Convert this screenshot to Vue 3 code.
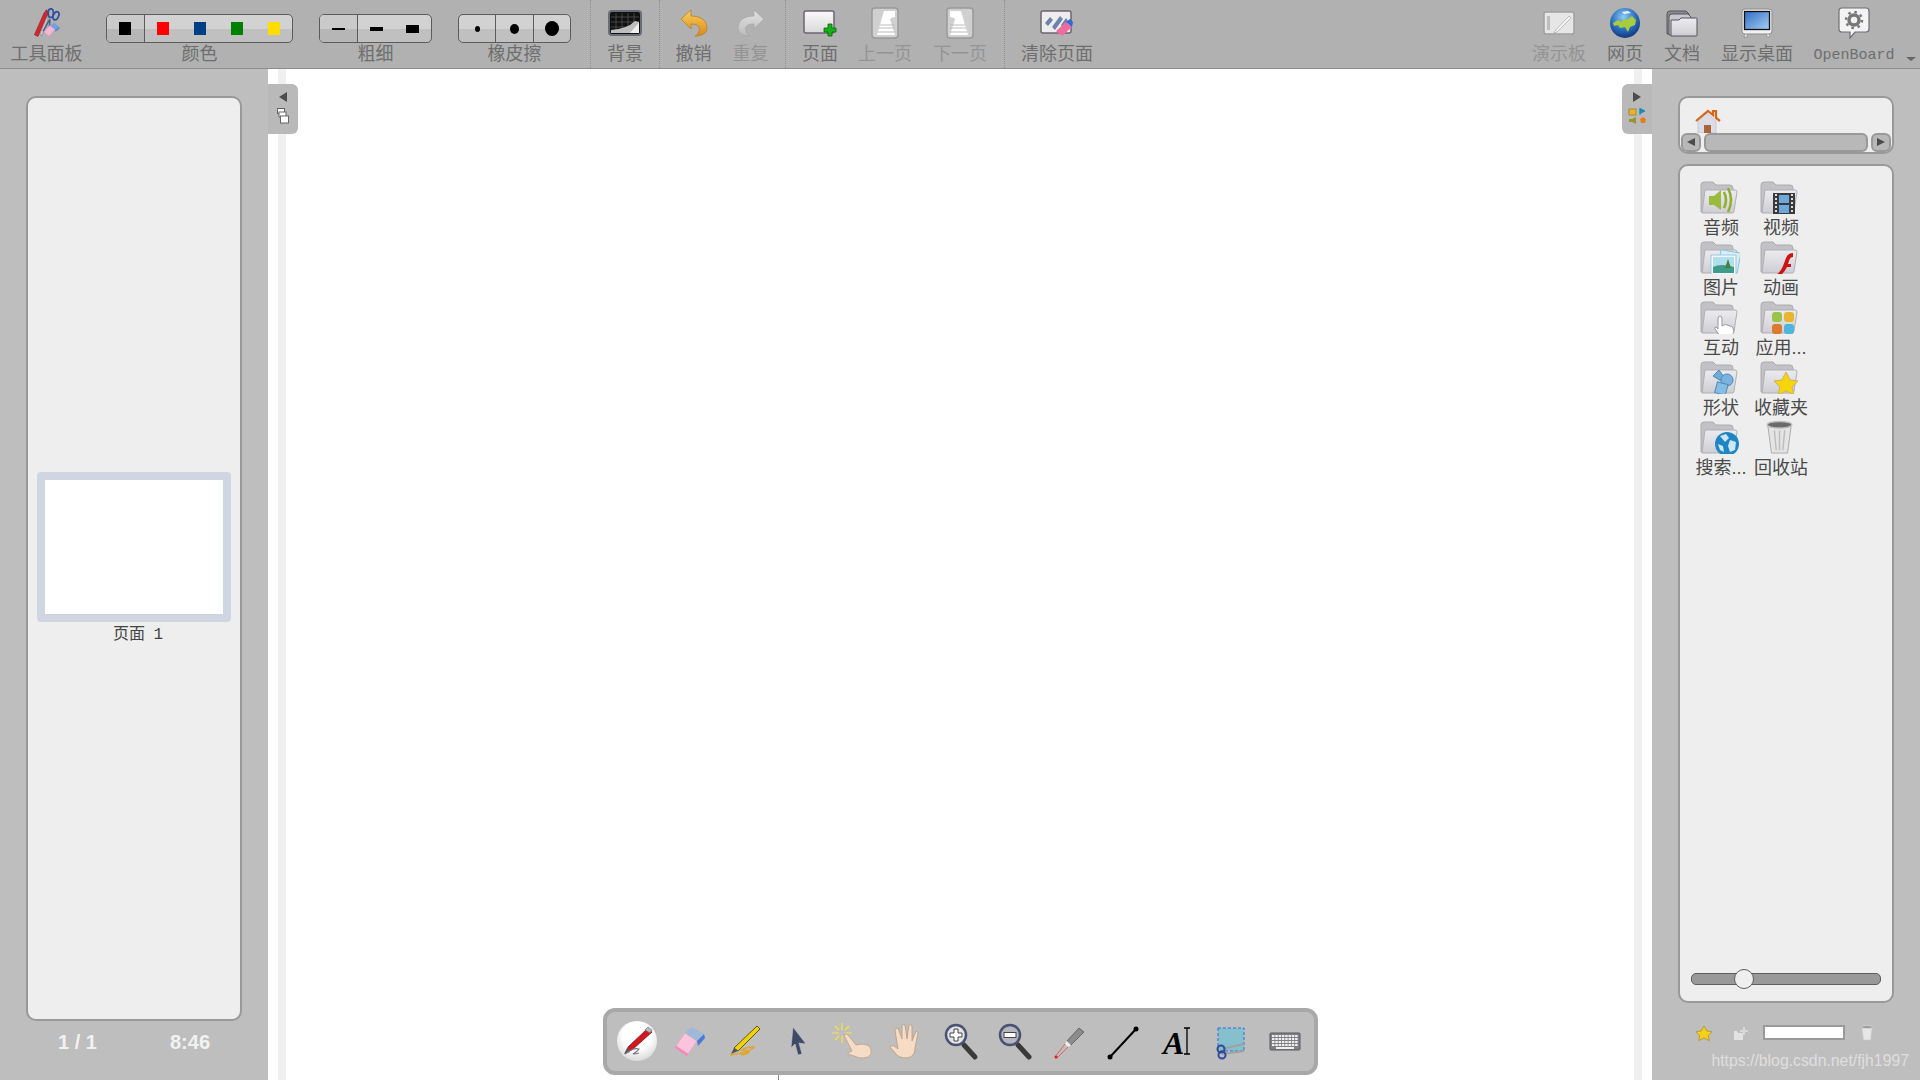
<script setup>
const colors = ['#000000', '#ff0000', '#003f87', '#008000', '#ffdd00']
const lines = [2, 4, 8]
const dots = [5, 9, 14]

const folders = [
  { label: '音频', icon: 'i-audio' },
  { label: '视频', icon: 'i-video' },
  { label: '图片', icon: 'i-image' },
  { label: '动画', icon: 'i-flash' },
  { label: '互动', icon: 'i-hand' },
  { label: '应用...', icon: 'i-apps' },
  { label: '形状', icon: 'i-shapes' },
  { label: '收藏夹', icon: 'i-star' },
  { label: '搜索...', icon: 'i-web' },
]
</script>

<template>
  <div class="app">
    <!-- shared svg parts -->
    <svg class="defs" width="0" height="0">
      <defs>
        <linearGradient id="g-folder" x1="0" y1="0" x2="0" y2="1">
          <stop offset="0" stop-color="#ececf0" />
          <stop offset="1" stop-color="#cdcdd3" />
        </linearGradient>
        <linearGradient id="g-orange" x1="0" y1="0" x2="0" y2="1">
          <stop offset="0" stop-color="#f9cf62" />
          <stop offset="1" stop-color="#d98a16" />
        </linearGradient>
        <linearGradient id="g-grey" x1="0" y1="0" x2="0" y2="1">
          <stop offset="0" stop-color="#e2e2e2" />
          <stop offset="1" stop-color="#bcbcbc" />
        </linearGradient>
        <linearGradient id="g-sheet" x1="0" y1="0" x2="0" y2="1">
          <stop offset="0" stop-color="#fafafa" />
          <stop offset="1" stop-color="#d8d8d8" />
        </linearGradient>
        <linearGradient id="g-screen" x1="0" y1="0" x2="1" y2="1">
          <stop offset="0" stop-color="#2f6fc4" />
          <stop offset="1" stop-color="#a9cdf2" />
        </linearGradient>
        <radialGradient id="g-globe" cx="0.45" cy="0.3" r="0.75">
          <stop offset="0" stop-color="#8ecbf2" />
          <stop offset="0.55" stop-color="#2a6fc0" />
          <stop offset="1" stop-color="#0c2f70" />
        </radialGradient>
        <radialGradient id="g-pen" cx="0.5" cy="0.35" r="0.7">
          <stop offset="0.5" stop-color="#ffffff" />
          <stop offset="1" stop-color="#d4d4d4" />
        </radialGradient>
      </defs>
      <symbol id="folder" viewBox="0 0 40 36">
        <path d="M1 5q0-3 3-3h9l3 3h14q3 0 3 3v24H1z" fill="#c2c2c6" stroke="#acacb0" />
        <path d="M5 10h30q2 0 2 2l-3 19q0 2-2 2H2z" fill="url(#g-folder)" stroke="#b0b0b4" />
      </symbol>
      <symbol id="i-audio" viewBox="0 0 40 36">
        <path d="M9 16h5l7-6v20l-7-5H9z" fill="#9bbb3c" />
        <path d="M24 12q4 8 0 16M28 8q6 12 0 24" fill="none" stroke="#8fae2e" stroke-width="2.5" />
      </symbol>
      <symbol id="i-video" viewBox="0 0 40 36">
        <rect x="13" y="13" width="22" height="22" fill="#3a3a3a" />
        <rect x="19" y="15" width="10" height="8" fill="#6fa9dc" />
        <rect x="19" y="25" width="10" height="8" fill="#6fa9dc" />
        <path d="M15 15h2M15 19h2M15 23h2M15 27h2M15 31h2M31 15h2M31 19h2M31 23h2M31 27h2M31 31h2" stroke="#ddd" stroke-width="2" />
      </symbol>
      <symbol id="i-image" viewBox="0 0 40 36">
        <rect x="19" y="11" width="20" height="20" fill="#d8eef6" stroke="#8cc0d8" transform="rotate(10 28 22)" />
        <rect x="11" y="15" width="25" height="20" fill="#eefaff" stroke="#9cc8dc" />
        <rect x="13" y="17" width="21" height="16" fill="#b0e0ee" />
        <path d="M13 27q8-4 21 0v6H13z" fill="#3f9c8a" />
        <path d="M28 19l3 9h-6z" fill="#4b7f3a" />
      </symbol>
      <symbol id="i-flash" viewBox="0 0 40 36">
        <path d="M14 35q6-1 9-9l3-8q2-5 7-5v4q-3 0-4 4l-1 3h3v3h-4q-4 9-13 11z" fill="#cc1414" />
      </symbol>
      <symbol id="i-hand" viewBox="0 0 40 36">
        <path d="M18 19q0-3 2-3t2 3v7l2-1q2-1 3 0l3 1q2 0 3 2l1 4-3 5H21l-6-8q-1-2 1-2l2 2z" fill="#ffffff" stroke="#9a9a9a" />
      </symbol>
      <symbol id="i-apps" viewBox="0 0 40 36">
        <rect x="12" y="12" width="10" height="10" rx="3" fill="#9bc24a" />
        <rect x="24" y="12" width="10" height="10" rx="3" fill="#eab52e" />
        <rect x="12" y="24" width="10" height="10" rx="3" fill="#dc7a2e" />
        <rect x="24" y="24" width="10" height="10" rx="3" fill="#4fb4de" />
      </symbol>
      <symbol id="i-shapes" viewBox="0 0 40 36">
        <path d="M13 16l6-6 5 7-3 4z" fill="#6fabd6" stroke="#4d8ab8" />
        <circle cx="27" cy="20" r="6" fill="#7ab4de" stroke="#4d8ab8" />
        <rect x="16" y="23" width="11" height="11" fill="#86bde2" stroke="#4d8ab8" transform="rotate(15 21 28)" />
      </symbol>
      <symbol id="i-star" viewBox="0 0 40 36">
        <path d="M29 12l4 8 8 1-6 6 2 8-8-4-8 4 2-8-6-6 8-1z" transform="translate(-3 0)" fill="#f8d40c" stroke="#c9b35a" />
      </symbol>
      <symbol id="i-web" viewBox="0 0 40 36">
        <circle cx="27" cy="24" r="12" fill="#1f86c4" />
        <path d="M20 16l6-2 3 4-4 4zM30 20l6 2-1 8-5 2-2-6zM18 24l5 2 1 6-4-2z" fill="#cfe6f4" />
      </symbol>
    </svg>

    <header class="toolbar">
      <div class="tool w-panel">
        <span class="tool-icon">
          <svg width="29" height="31" viewBox="0 0 32 36">
            <path d="M2 31l11-25 3-4 2 2-1 4-11 25z" fill="#d8242c" stroke="#7a1a1e" stroke-width=".6" />
            <path d="M8 31l8-20 2 1-7 20z" fill="#c9c9cf" stroke="#6d6d74" stroke-width=".6" />
            <path d="M12 27l8-14M19 27l1-14" stroke="#4a5a80" stroke-width="1.6" />
            <ellipse cx="21" cy="6" rx="3" ry="5" fill="none" stroke="#2c4fa0" stroke-width="2" />
            <ellipse cx="27" cy="9" rx="3" ry="5" fill="none" stroke="#2c4fa0" stroke-width="2" transform="rotate(25 27 9)" />
            <path d="M13 28l7-8 6 5-7 8z" fill="#f4b6d4" stroke="#c88cae" stroke-width=".5" />
            <path d="M20 20l5-3 6 5-5 3z" fill="#6ea3dc" />
            <path d="M26 25l5-3v2l-5 4z" fill="#5c86c4" />
          </svg>
        </span>
        <span class="tool-label">工具面板</span>
      </div>

      <div class="seg-group w-colors">
        <div class="seg">
          <div v-for="(c, i) in colors" :key="c" class="cell" :class="{ 'cell-first': i === 0 }">
            <i class="swatch" :style="{ background: c }"></i>
          </div>
        </div>
        <span class="tool-label">颜色</span>
      </div>

      <div class="seg-group w-seg">
        <div class="seg">
          <div v-for="(h, i) in lines" :key="h" class="cell" :class="{ 'cell-first': i === 0 }">
            <i class="stroke" :style="{ height: h + 'px' }"></i>
          </div>
        </div>
        <span class="tool-label">粗细</span>
      </div>

      <div class="seg-group w-seg">
        <div class="seg">
          <div v-for="d in dots" :key="d" class="cell cell-split">
            <i class="dot" :style="{ width: d + 'px', height: d + 1 + 'px' }"></i>
          </div>
        </div>
        <span class="tool-label">橡皮擦</span>
      </div>

      <div class="sep sep-first"></div>

      <div class="tool w-bg">
        <span class="tool-icon">
          <svg width="34" height="26" viewBox="0 0 34 26">
            <rect x="1" y="1" width="32" height="24" rx="3" fill="#111" stroke="#6a6c78" stroke-width="2" />
            <path d="M3 7h28M3 12h28M3 17h28M8 3v20M14 3v20M20 3v20M26 3v20" stroke="#5a5a5a" stroke-width=".7" />
            <path d="M3 23v-3q16-1 24-9l4 1v11z" fill="#bdbdbd" />
            <path d="M22 23q5-6 9-10v10z" fill="#efefef" />
          </svg>
        </span>
        <span class="tool-label">背景</span>
      </div>

      <div class="sep"></div>

      <div class="tool w-undo">
        <span class="tool-icon">
          <svg width="30" height="30" viewBox="0 0 30 30">
            <path d="M2 11l10-9v6c9 0 16 4 16 12 0 5-5 8-12 8 4-2 5-6 4-9-1-2-4-3-8-3v5z" fill="url(#g-orange)" stroke="#b47a18" stroke-width=".7" />
          </svg>
        </span>
        <span class="tool-label">撤销</span>
      </div>
      <div class="tool w-undo off">
        <span class="tool-icon">
          <svg width="30" height="30" viewBox="0 0 30 30">
            <path d="M28 11l-10-9v6C9 8 2 12 2 20c0 5 5 8 12 8-4-2-5-6-4-9 1-2 4-3 8-3v5z" fill="url(#g-grey)" stroke="#a4a4a4" stroke-width=".7" />
          </svg>
        </span>
        <span class="tool-label">重复</span>
      </div>

      <div class="sep sep-wide"></div>

      <div class="tool w-page">
        <span class="tool-icon">
          <svg width="34" height="28" viewBox="0 0 34 28">
            <rect x="1" y="2" width="30" height="22" rx="2" fill="url(#g-sheet)" stroke="#6c6670" stroke-width="1.5" />
            <path d="M25 15h4v4h4v4h-4v4h-4v-4h-4v-4h4z" fill="#18b018" stroke="#0a5f0a" stroke-width=".8" />
          </svg>
        </span>
        <span class="tool-label">页面</span>
      </div>
      <div class="tool w-prev off">
        <span class="tool-icon">
          <svg width="28" height="32" viewBox="0 0 28 32">
            <rect x="1" y="1" width="26" height="30" rx="3" fill="#d0d0d0" stroke="#999" stroke-width="1.5" />
            <path d="M13 4h11v6q-3 0-5 2l5 16H6z" fill="#fff" />
            <path d="M9 18h15M8 21h16M7 25h17" stroke="#bbb" />
          </svg>
        </span>
        <span class="tool-label">上一页</span>
      </div>
      <div class="tool w-next off">
        <span class="tool-icon">
          <svg width="28" height="32" viewBox="0 0 28 32">
            <rect x="1" y="1" width="26" height="30" rx="3" fill="#d0d0d0" stroke="#999" stroke-width="1.5" />
            <path d="M15 4H4v6q3 0 5 2L4 28h18z" fill="#fff" />
            <path d="M4 18h15M4 21h16M4 25h17" stroke="#bbb" />
          </svg>
        </span>
        <span class="tool-label">下一页</span>
      </div>

      <div class="sep sep-clear"></div>

      <div class="tool w-clear">
        <span class="tool-icon">
          <svg width="34" height="28" viewBox="0 0 34 28">
            <rect x="1" y="2" width="30" height="22" rx="2" fill="#ededed" stroke="#6c6670" stroke-width="1.5" />
            <path d="M5 14l5-6 3 3-5 6zM12 18l8-11 3 3-8 11zM21 16l5-7 2 3-5 7z" fill="#6d83ad" />
            <path d="M16 22l10-9 6 5-10 9z" fill="#f06c9e" />
            <path d="M26 13l4-3 3 3-1 5z" fill="#3468d4" />
          </svg>
        </span>
        <span class="tool-label">清除页面</span>
      </div>

      <div class="tool w-board off push">
        <span class="tool-icon">
          <svg width="32" height="24" viewBox="0 0 32 24">
            <rect x="1" y="1" width="30" height="22" rx="2" fill="#e6e6e6" stroke="#a0a0a0" stroke-width="1.5" />
            <rect x="4" y="5" width="3" height="14" fill="#bdbdbd" />
            <path d="M12 20l14-15 2 2-14 14-3 1z" fill="#f6f6f6" stroke="#a8a8a8" stroke-width=".7" />
          </svg>
        </span>
        <span class="tool-label">演示板</span>
      </div>
      <div class="tool w-board">
        <span class="tool-icon">
          <svg width="30" height="30" viewBox="0 0 30 30">
            <circle cx="15" cy="15" r="15" fill="url(#g-globe)" />
            <path d="M3 15l5-3 3 2 3-3 3 1 5-4 4 4-1 5-5 2-2 5-3-5-5 1-2-3-4 1z" fill="#a8cc3c" />
            <path d="M12 4l6-1 3 2-7 1z" fill="#e6f2fa" />
          </svg>
        </span>
        <span class="tool-label">网页</span>
      </div>
      <div class="tool w-docs">
        <span class="tool-icon">
          <svg width="32" height="28" viewBox="0 0 32 28">
            <path d="M1 5q0-3 3-3h16l3 3v20H1z" fill="#8a8a90" stroke="#55555c" />
            <path d="M3 8q0-3 3-3h16l3 3v18H3z" fill="#c8c8cc" stroke="#55555c" />
            <path d="M5 11h8l2-2h15q1 0 1 1v16q0 1-1 1H5z" fill="url(#g-folder)" stroke="#55555c" />
          </svg>
        </span>
        <span class="tool-label">文档</span>
      </div>
      <div class="tool w-desk">
        <span class="tool-icon">
          <svg width="32" height="30" viewBox="0 0 32 30">
            <path d="M4 24h3l-1 5H3zM25 24h3l1 5h-3z" fill="#e8e8e8" stroke="#888" stroke-width=".7" />
            <rect x="1" y="1" width="30" height="25" rx="3" fill="#f2f2f2" stroke="#8c8c92" />
            <rect x="3.500" y="3.500" width="25" height="18" fill="url(#g-screen)" stroke="#111" stroke-width="1.300" />
          </svg>
        </span>
        <span class="tool-label">显示桌面</span>
      </div>
      <div class="tool w-ob">
        <span class="tool-icon">
          <svg width="32" height="32" viewBox="0 0 32 32">
            <path d="M4 1h24q3 0 3 3v18q0 3-3 3H17l-5 6v-6H4q-3 0-3-3V4q0-3 3-3z" fill="#f4f4f4" stroke="#6e6e74" stroke-width="1.2" />
            <circle cx="16" cy="13" r="5" fill="none" stroke="#777" stroke-width="3.500" />
            <circle cx="16" cy="13" r="8" fill="none" stroke="#777" stroke-width="2.500" stroke-dasharray="2.500 3.800" />
          </svg>
        </span>
        <span class="tool-label latin">OpenBoard</span>
      </div>
      <div class="more"><i class="more-arrow"></i></div>
    </header>

    <main class="body">
      <aside class="side">
        <section class="card card-pages">
          <div class="thumb"></div>
          <div class="thumb-label">页面 <span class="latin-num">1</span></div>
        </section>
        <div class="status">
          <span class="count">1 / 1</span>
          <span class="clock">8:46</span>
        </div>
      </aside>

      <div class="canvas">
        <div class="sheet"></div>

        <div class="tab tab-left">
          <i class="tri tri-left"></i>
          <svg width="12" height="16" viewBox="0 0 12 16">
            <rect x=".5" y=".5" width="7" height="5" fill="#fff" stroke="#666" />
            <rect x="2" y="4" width="7" height="5" fill="#fff" stroke="#666" />
            <rect x="3.500" y="8" width="8" height="7" fill="#fff" stroke="#666" />
          </svg>
        </div>
        <div class="tab tab-right">
          <i class="tri tri-right"></i>
          <svg width="18" height="16" viewBox="0 0 18 16">
            <rect x="1" y="1" width="7" height="6" fill="#e6b32e" stroke="#9a7a18" stroke-width=".7" />
            <path d="M12 0v7M12 .5l5 2.500-5 2.500z" fill="#1a8cb4" stroke="#1a8cb4" />
            <path d="M8 9v7l-4-2H1v-3h3z" fill="#9a9430" />
            <path d="M15 9l3 2-1 4h-4l-1-4z" fill="#ea7a1e" />
          </svg>
        </div>

        <nav class="palette">
          <span class="pal pal-active">
            <svg width="40" height="40" viewBox="0 0 40 40">
              <ellipse cx="20" cy="20" rx="20" ry="20" fill="url(#g-pen)" />
              <path d="M11 26l19-18 5 3-20 18-5 1z" fill="#d31620" stroke="#6e1014" stroke-width=".7" />
              <path d="M28 9l3-3 4 3-2 3z" fill="#b8b8b8" stroke="#666" stroke-width=".6" />
              <path d="M10 27l-3 6 6-2z" fill="#555" />
              <path d="M8 33q8-7 14-5-2 3-6 5 3 0 6-1" fill="none" stroke="#777" stroke-width="1.2" />
            </svg>
          </span>
          <span class="pal">
            <svg width="40" height="40" viewBox="0 0 40 40">
              <path d="M5 25l9-13 12 8-9 13z" fill="#fbc4dc" stroke="#e69dbd" stroke-width=".5" />
              <path d="M14 12l6-6 13 7-7 7z" fill="#9fb9d8" />
              <path d="M26 20l7-7 1 4-7 8z" fill="#4d78d8" />
              <path d="M5 25l12 8-1 2-12-8z" fill="#f884ba" />
            </svg>
          </span>
          <span class="pal">
            <svg width="40" height="40" viewBox="0 0 40 40">
              <path d="M32 5l3 3-22 22-4-3z" fill="#f2d206" stroke="#3a3a10" stroke-width=".8" />
              <path d="M9 27l4 3-7 3z" fill="#555" />
              <path d="M5 34q9-1 15-3 8-3 9-5-8 0-12 3 4 0 7 2-4 3-8 3" fill="none" stroke="#e2a52a" stroke-width="1.6" />
            </svg>
          </span>
          <span class="pal">
            <svg width="40" height="40" viewBox="0 0 40 40">
              <path d="M14 6l13 17-7-1 3 11-4 1-3-11-4 4z" fill="#3e4a68" stroke="#c8c8cc" stroke-width=".6" />
            </svg>
          </span>
          <span class="pal">
            <svg width="44" height="40" viewBox="0 0 44 40">
              <path d="M11 2v7M11 15v7M1 12h7M14 12h7M4 5l4 4M18 5l-4 4M4 19l4-4" stroke="#f8e43c" stroke-width="1.200" />
              <path d="M13 14q2-2 4 0l8 10q8-2 13 1 3 3 2 8-2 4-8 4-5 0-9-2l-6-2q-1-2 2-2l2-1z" fill="#f6dcc4" stroke="#b89a80" stroke-width=".7" />
            </svg>
          </span>
          <span class="pal">
            <svg width="40" height="40" viewBox="0 0 40 40">
              <path d="M11 7l4 11 0-14q2-1 3 0l2 14 2-14q2-1 3 1l0 15 4-10q2 0 2 2l-3 15q0 9-8 10-8 0-11-4l-6-7q1-2 4-1l4 3-3-19q1-2 3-2z" fill="#f6dcc4" stroke="#b89a80" stroke-width=".8" />
            </svg>
          </span>
          <span class="pal">
            <svg width="40" height="40" viewBox="0 0 40 40">
              <path d="M23 24l11 12" stroke="#3a3a3a" stroke-width="5" stroke-linecap="round" />
              <circle cx="15" cy="14" r="10" fill="#e4e4e8" stroke="#4a5272" stroke-width="2.500" />
              <path d="M13 8h4v4h4v4h-4v4h-4v-4H9v-4h4z" fill="#fff" stroke="#444" />
            </svg>
          </span>
          <span class="pal">
            <svg width="40" height="40" viewBox="0 0 40 40">
              <path d="M23 24l11 12" stroke="#3a3a3a" stroke-width="5" stroke-linecap="round" />
              <circle cx="15" cy="14" r="10" fill="#b4b6c0" stroke="#4a5272" stroke-width="2.500" />
              <rect x="9" y="11.500" width="12" height="5" fill="#fff" stroke="#444" />
            </svg>
          </span>
          <span class="pal">
            <svg width="40" height="40" viewBox="0 0 40 40">
              <path d="M18 20l12-13 5 4-13 13z" fill="#8c8c8c" stroke="#4a4a4a" stroke-width=".7" />
              <path d="M18 20l4 4-3 2-3-3z" fill="#eee" />
              <path d="M16 23L6 36M19 26L8 37" stroke="#e04848" stroke-width=".8" />
              <circle cx="7" cy="36" r="1.500" fill="#e01818" />
            </svg>
          </span>
          <span class="pal">
            <svg width="40" height="40" viewBox="0 0 40 40">
              <path d="M7 36L33 8" stroke="#000" stroke-width="2" />
              <circle cx="7" cy="36" r="2.500" />
              <circle cx="33" cy="8" r="2.500" />
            </svg>
          </span>
          <span class="pal">
            <svg width="40" height="40" viewBox="0 0 40 40">
              <text x="6" y="33" class="glyph">A</text>
              <path d="M27 7h6M30 7v26M27 33h6" stroke="#000" stroke-width="1.300" fill="none" />
            </svg>
          </span>
          <span class="pal">
            <svg width="40" height="40" viewBox="0 0 40 40">
              <rect x="7" y="7" width="26" height="23" fill="#86c0cc" stroke="#2a6ce0" stroke-dasharray="3 2" />
              <path d="M11 28l22-5M11 33l22-3" stroke="#a0a0a0" stroke-width="2" />
              <circle cx="10" cy="28" r="3.500" fill="none" stroke="#2f4a9c" stroke-width="2" />
              <circle cx="11" cy="34" r="3.500" fill="none" stroke="#2f4a9c" stroke-width="2" />
            </svg>
          </span>
          <span class="pal">
            <svg width="40" height="40" viewBox="0 0 40 40">
              <rect x="5" y="12" width="30" height="17" rx="1" fill="#7f7f84" stroke="#5a5a60" />
              <path d="M7 15h26M7 18h26M7 21h26M7 24h26" stroke="#f0f0f0" stroke-width="2" stroke-dasharray="2.500 .8" />
              <path d="M11 27h18" stroke="#f0f0f0" stroke-width="2" />
            </svg>
          </span>
        </nav>
      </div>

      <aside class="side side-right">
        <section class="card card-path">
          <svg class="home" width="26" height="24" viewBox="0 0 26 24">
            <path d="M3 12v12h18V12l-9-8z" fill="#dcdce6" stroke="#b8b8c4" stroke-width=".6" />
            <path d="M1 12L13 2l5 4V2h3v7l4 3" fill="none" stroke="#d8651c" stroke-width="2.200" />
            <rect x="9" y="16" width="7" height="8" fill="#a8653a" />
          </svg>
          <div class="scroller">
            <div class="scroll-btn"><i class="tri tri-left small"></i></div>
            <div class="scroll-track"></div>
            <div class="scroll-btn"><i class="tri tri-right small"></i></div>
          </div>
        </section>

        <section class="card card-library">
          <div class="library">
            <div v-for="f in folders" :key="f.label" class="item">
              <svg width="40" height="36">
                <use href="#folder" width="40" height="36" />
                <use :href="'#' + f.icon" width="40" height="36" />
              </svg>
              <span>{{ f.label }}</span>
            </div>
            <div class="item">
              <svg width="40" height="36" viewBox="0 0 40 36">
                <path d="M7 5l4 30h17l4-30z" fill="#e4e4e4" stroke="#a8a8a8" />
                <ellipse cx="19.500" cy="5" rx="13" ry="3.500" fill="#6a6a6a" stroke="#bcbcbc" stroke-width="1.500" />
                <path d="M14 11l2 21M19.500 11v21M25 11l-2 21" stroke="#bcbcbc" stroke-width="1.500" />
              </svg>
              <span>回收站</span>
            </div>
          </div>
          <div class="slider">
            <i class="knob"></i>
          </div>
        </section>

        <div class="lib-foot">
          <svg class="f-star" width="24" height="16" viewBox="0 0 24 16">
            <path d="M12 1l3 5 5 .8-3.600 3.700.8 5L12 13l-5.200 2.500.8-5L4 6.800 9 6z" fill="#f5d018" stroke="#a8881a" stroke-width=".7" />
          </svg>
          <svg class="f-add" width="24" height="16" viewBox="0 0 24 16">
            <path d="M6 6h3l1 2h5v7H6z" fill="#e2e2e2" />
            <path d="M15 2h2v3h3v2h-3v3h-2V7h-3V5h3z" fill="#d8d8d8" />
          </svg>
          <input class="f-input" type="text" />
          <svg class="f-trash" width="24" height="16" viewBox="0 0 24 16">
            <path d="M7 2l1.500 13h7L17 2z" fill="#e6e6e6" stroke="#cfcfcf" stroke-width=".6" />
            <ellipse cx="12" cy="2" rx="5.500" ry="1.500" fill="#9a9a9a" stroke="#e4e4e4" stroke-width=".6" />
          </svg>
        </div>
      </aside>
    </main>

    <div class="watermark">https://blog.csdn.net/fjh1997</div>
  </div>
</template>

<style>
html,
body {
  margin: 0;
  height: 100%;
  overflow: hidden;
}
</style>

<style scoped>
.app {
  position: relative;
  display: flex;
  flex-direction: column;
  width: 1920px;
  height: 1080px;
  overflow: hidden;
  font-family: "Liberation Sans", "Noto Sans CJK SC", sans-serif;
}

.defs {
  position: absolute;
}

/* top bar */
.toolbar {
  display: flex;
  flex: none;
  height: 68px;
  background: #b1b1b1;
  border-bottom: 1px solid #8c8c8c;
}

.tool {
  display: flex;
  flex: none;
  flex-direction: column;
  align-items: center;
}

.tool-icon {
  display: flex;
  align-items: center;
  justify-content: center;
  height: 38px;
  margin-top: 4px;
}

.tool-label {
  font-size: 18px;
  line-height: 24px;
  color: #6e6e6e;
  white-space: nowrap;
  text-align: center;
}

.off .tool-label {
  color: #949494;
}

.latin {
  padding-top: 2px;
  font-family: "Liberation Mono", monospace;
  font-size: 15px;
}

.w-panel { width: 93px; }
.w-bg { width: 68px; }
.w-undo { width: 57px; }
.w-page { width: 60px; margin-left: 4px; }
.w-prev { width: 70px; }
.w-next { width: 80px; }
.w-clear { width: 80px; margin-left: 12px; }
.w-board { width: 66px; }
.w-docs { width: 48px; }
.w-desk { width: 102px; }
.w-ob { width: 92px; }
.push { margin-left: auto; }

.sep {
  flex: none;
  width: 0;
  border-left: 1px dotted #8f8f8f;
}

.sep-first {
  margin-left: 19px;
}

.sep + .w-undo {
  margin-left: 5px;
}

.sep-wide {
  margin-left: 6px;
}

.sep-clear {
  margin-left: 4px;
}

.seg-group {
  display: flex;
  flex: none;
  flex-direction: column;
  padding-top: 14px;
}

.seg-group .tool-label {
  margin-top: -1px;
}

.w-colors {
  width: 187px;
  margin-left: 13px;
}

.w-seg {
  width: 113px;
  margin-left: 26px;
}

.seg {
  display: flex;
  height: 29px;
  box-sizing: border-box;
  overflow: hidden;
  background: linear-gradient(#d2d2d2 50%, #c0c0c0 50%);
  border: 1.5px solid #5c5c5c;
  border-radius: 5px;
}

.cell {
  display: flex;
  flex: 1;
  align-items: center;
  justify-content: center;
}

.cell-first {
  background: linear-gradient(#cacaca 50%, #b6b6b6 50%);
  border-right: 1px solid #5c5c5c;
}

.cell-split + .cell-split {
  border-left: 1px solid #5c5c5c;
}

.swatch {
  width: 12px;
  height: 13px;
}

.stroke {
  width: 13px;
  background: #000;
}

.dot {
  background: #000;
  border-radius: 50%;
}

.more {
  flex: none;
  width: 16px;
  padding-left: 4px;
}

.more-arrow {
  display: block;
  width: 0;
  margin-top: 57px;
  margin-left: 2px;
  border-top: 4px solid #666;
  border-right: 5px solid transparent;
  border-left: 5px solid transparent;
}

/* body */
.body {
  display: flex;
  flex: 1;
  min-height: 0;
}

.side {
  display: flex;
  flex: none;
  flex-direction: column;
  box-sizing: border-box;
  width: 268px;
  padding-top: 27px;
  background: #bebebe;
}

.card {
  box-sizing: border-box;
  width: 216px;
  margin-left: 26px;
  background: #eeeeee;
  border: 2px solid #999999;
  border-radius: 10px;
}

.card-pages {
  display: flex;
  flex: 1;
  flex-direction: column;
  align-items: center;
  justify-content: center;
  padding-top: 1px;
}

.thumb {
  box-sizing: border-box;
  width: 194px;
  height: 150px;
  background: #fff;
  border: 8px solid #d0d6e1;
  border-radius: 4px;
}

.thumb-label {
  padding-left: 8px;
  font-size: 16px;
  line-height: 24px;
  color: #444;
}

.latin-num {
  margin-left: 4px;
  font-family: "Liberation Mono", monospace;
}

.status {
  display: flex;
  flex: none;
  height: 59px;
  padding-left: 26px;
  font-size: 20px;
  font-weight: 700;
  line-height: 42px;
  color: #f2f2f2;
  text-align: center;
}

.count {
  width: 103px;
}

.clock {
  width: 122px;
}

.canvas {
  position: relative;
  flex: 1;
  box-sizing: border-box;
  padding: 0 10px;
  background: #fff;
}

.sheet {
  box-sizing: border-box;
  height: 100%;
  border-right: 8px solid #f0f0f0;
  border-left: 8px solid #f0f0f0;
}

.tab {
  position: absolute;
  top: 15px;
  display: flex;
  flex-direction: column;
  align-items: center;
  gap: 6px;
  box-sizing: border-box;
  width: 30px;
  height: 50px;
  padding-top: 8px;
  background: #b9b9b9;
}

.tab-left {
  left: 0;
  border-radius: 0 6px 6px 0;
}

.tab-right {
  right: 0;
  border-radius: 6px 0 0 6px;
}

.tri {
  display: block;
  width: 0;
  border-top: 5px solid transparent;
  border-bottom: 5px solid transparent;
}

.tri-left {
  border-right: 8px solid #4c4c4c;
}

.tri-right {
  border-left: 8px solid #4c4c4c;
}

.tri.small {
  border-top-width: 4px;
  border-bottom-width: 4px;
}

/* floating tool palette */
.palette {
  position: absolute;
  bottom: 5px;
  left: 335px;
  display: flex;
  align-items: center;
  justify-content: center;
  box-sizing: border-box;
  width: 715px;
  height: 67px;
  padding-bottom: 2px;
  background: #bebebe;
  border: 4px solid #a8a8a8;
  border-radius: 12px;
}

.palette::after {
  content: "";
  position: absolute;
  top: 100%;
  left: 171px;
  width: 1px;
  height: 6px;
  margin-top: 4px;
  background: #8a8a8a;
}

.pal {
  display: flex;
  flex: none;
  align-items: center;
  justify-content: center;
  width: 54px;
  height: 40px;
}

.glyph {
  font-family: "Liberation Serif", serif;
  font-size: 32px;
  font-style: italic;
  font-weight: 700;
}

/* resource library */
.side-right {
  padding-top: 27px;
}

.card-path {
  position: relative;
  flex: none;
  height: 58px;
  padding: 11px 0 0 15px;
}

.home {
  display: block;
}

.scroller {
  position: absolute;
  right: 1px;
  bottom: 0;
  left: 1px;
  display: flex;
  gap: 3px;
  align-items: center;
  height: 20px;
}

.scroll-btn {
  display: flex;
  flex: none;
  align-items: center;
  justify-content: center;
  box-sizing: border-box;
  width: 20px;
  height: 19px;
  background: #b8b8b8;
  border: 2px solid #999999;
  border-radius: 6px;
}

.scroll-track {
  flex: 1;
  box-sizing: border-box;
  height: 19px;
  background: #b8b8b8;
  border: 2px solid #999999;
  border-radius: 6px;
}

.card-library {
  display: flex;
  flex: 1;
  flex-direction: column;
  min-height: 0;
  padding: 14px 10px 16px 11px;
  margin-top: 10px;
}

.library {
  display: grid;
  flex: 1;
  grid-template-columns: 60px 60px;
  grid-auto-rows: 60px;
}

.item {
  display: flex;
  flex-direction: column;
  align-items: center;
  font-size: 18px;
  line-height: 24px;
  color: #4a4a4a;
  white-space: nowrap;
}

.item span {
  margin-top: 2px;
}

.item svg {
  margin-left: -2px;
}

.slider {
  position: relative;
  flex: none;
  box-sizing: border-box;
  width: 190px;
  height: 12px;
  background: #999999;
  border: 1px solid #5e5e5e;
  border-radius: 5px;
}

.knob {
  position: absolute;
  top: -5px;
  left: 42px;
  box-sizing: border-box;
  width: 20px;
  height: 20px;
  background: #efefef;
  border: 1px solid #5e5e5e;
  border-radius: 50%;
}

.lib-foot {
  display: flex;
  flex: none;
  align-items: center;
  height: 77px;
  box-sizing: border-box;
  padding-top: 22px;
  padding-bottom: 40px;
  padding-left: 40px;
}

.lib-foot svg {
  flex: none;
}

.f-add {
  margin-left: 12px;
}

.f-input {
  box-sizing: border-box;
  width: 82px;
  height: 15px;
  padding: 0;
  margin-left: 11px;
  background: #fff;
  border: 2px solid #9a9a9a;
  outline: none;
}

.f-trash {
  margin-left: 10px;
}

.watermark {
  position: absolute;
  right: 11px;
  bottom: 10px;
  font-size: 15.800px;
  line-height: 18px;
  color: #dedede;
}
</style>
